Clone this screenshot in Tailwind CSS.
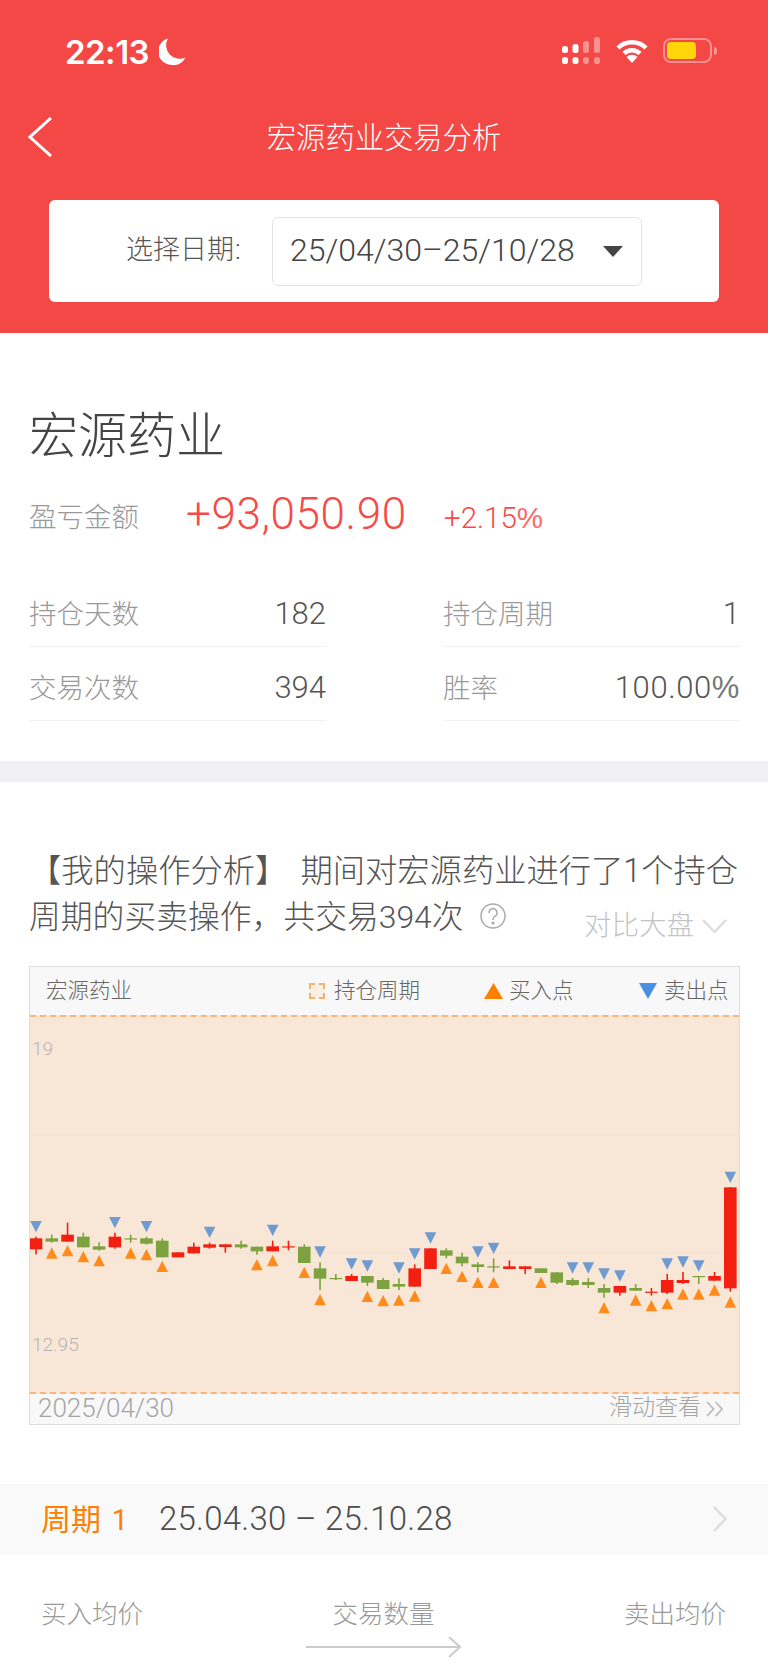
<!DOCTYPE html>
<html lang="zh-CN">
<head>
  <meta charset="UTF-8" />
  <meta name="viewport" content="width=device-width, initial-scale=1.0" />
  <title>宏源药业交易分析</title>
  <script src="https://cdn.jsdelivr.net/npm/@tailwindcss/browser@4"></script>
</head>
<body class="w-[768px] h-[1663px] overflow-hidden bg-white text-[#555] font-light font-['Roboto','Noto_Sans_CJK_SC',sans-serif]">

  <!-- Red header -->
  <div class="h-[333px] bg-[#f44846] text-white relative">
    <!-- Status bar -->
    <div class="h-[100px] flex items-start pl-[65px] pr-[51px] pt-[38px]">
      <span class="text-[33px] leading-[28px] font-semibold font-['Inter',sans-serif] tracking-[-0.5px]">22:13</span>
      <svg class="ml-[10px]" width="27" height="27" viewBox="0 0 27 27"><path d="M9 0.5 A13.5 13.5 0 0 0 26.5 19.5 A13 13 0 0 1 13 27 A13.5 13.5 0 0 1 9 0.5 Z" fill="#fff"/></svg>
      <div class="ml-auto flex items-start -mt-[1px]">
        <svg width="38" height="28" viewBox="0 0 38 28" fill="#fff">
          <rect x="0" y="9" width="6" height="7" rx="2.5"/><rect x="10.500" y="7" width="6" height="9" rx="2.500"/>
          <rect x="21" y="4" width="6" height="12" rx="2.500" opacity=".4"/><rect x="32" y="0" width="6" height="16" rx="2.500" opacity=".4"/>
          <rect x="0" y="20" width="6" height="7" rx="2.500"/><rect x="10.500" y="20" width="6" height="7" rx="2.500"/>
          <rect x="21" y="20" width="6" height="7" rx="2.500" opacity=".4"/><rect x="32" y="20" width="6" height="7" rx="2.500" opacity=".4"/>
        </svg>
        <svg class="ml-[16px] mt-[2px]" width="32" height="24" viewBox="0 0 32 24" fill="none" stroke="#fff" stroke-width="4.500">
          <path d="M2 9 A20 20 0 0 1 30 9"/><path d="M8 14.500 A11.500 11.500 0 0 1 24 14.500"/>
          <path d="M16 24 L10.500 18 A8 8 0 0 1 21.500 18 Z" fill="#fff" stroke="none"/>
        </svg>
        <div class="ml-[15px] mt-[1px] w-[49px] h-[25px] rounded-[8px] border-2 border-white/40 p-[2px]">
          <div class="w-[29px] h-full rounded-[4px] bg-[#ffd60a]"></div>
        </div>
        <div class="ml-[2px] mt-[10px] w-[3px] h-[8px] rounded-r-full bg-white/40"></div>
      </div>
    </div>
    <!-- Nav bar -->
    <div class="h-[100px] relative flex justify-center pt-[18px]">
      <svg class="absolute left-[28px] top-[17px]" width="24" height="40" viewBox="0 0 24 40" fill="none" stroke="#fff" stroke-width="3"><path d="M23 1 L2 20 L23 39"/></svg>
      <span class="text-[29.300px] leading-[40px]">宏源药业交易分析</span>
    </div>
    <!-- Date picker -->
    <div class="absolute left-[49px] top-[200px] w-[670px] h-[102px] bg-white rounded-[6px] flex items-center">
      <span class="ml-[77px] w-[146px] -mt-[2px] text-[27px] text-[#555]">选择日期<span class="ml-[1px]">:</span></span>
      <div class="w-[370px] h-[69px] border border-[#e3e3e3] rounded-[6px] flex items-center pl-[17px] pr-[18px] text-[#444]">
        <span class="text-[32px] -mt-[2px]">25/04/30–25/10/28</span>
        <svg class="ml-auto" width="20" height="11" viewBox="0 0 20 11"><path d="M0 0 H20 L10 11 Z" fill="#444"/></svg>
      </div>
    </div>
  </div>

  <!-- Summary -->
  <div class="h-[428px] pl-[29px] pr-[28px] pt-[79px]">
    <h1 class="text-[49px] leading-[50px] text-[#444]">宏源药业</h1>
    <div class="mt-[36px] flex items-center h-[40px]">
      <span class="w-[157px] text-[27.500px] text-[#999]">盈亏金额</span>
      <span class="w-[258px] mb-[9px] text-[44px] tracking-[0.6px] text-[#f64a48]">+93,050.90</span>
      <span class="text-[29.500px] text-[#f64a48]">+2.15<span class="font-['Liberation_Sans'] text-[#fa6a69]">%</span></span>
    </div>
    <div class="mt-[35px] grid grid-cols-[297px_297px] justify-between">
      <div class="h-[74px] border-b border-[#f1f1f1] flex justify-between items-center pt-[10px]"><span class="text-[27.500px] text-[#999]">持仓天数</span><span class="text-[31px]">182</span></div>
      <div class="h-[74px] border-b border-[#f1f1f1] flex justify-between items-center pt-[10px]"><span class="text-[27.500px] text-[#999]">持仓周期</span><span class="text-[31px]">1</span></div>
      <div class="h-[74px] border-b border-[#f1f1f1] flex justify-between items-center pt-[10px]"><span class="text-[27.500px] text-[#999]">交易次数</span><span class="text-[31px]">394</span></div>
      <div class="h-[74px] border-b border-[#f1f1f1] flex justify-between items-center pt-[10px]"><span class="text-[27.500px] text-[#999]">胜率</span><span class="text-[31px] tracking-[0.6px]">100.00<span class="font-['Liberation_Sans'] text-[#777]">%</span></span></div>
    </div>
  </div>

  <div class="h-[21px] bg-[#efeff4]"></div>

  <!-- Operation analysis -->
  <div class="relative h-[702px] pl-[29px] pr-[28px] pt-[66px]">
    <p class="text-[32.300px] leading-[46px] text-[#555] whitespace-nowrap">【我的操作分析】<span class="ml-[13px]">期间对宏源药业进行了1个持仓</span><br /><span class="text-[31.800px]">周期的买卖操作&#65292;共交易394次</span></p>
    <svg class="absolute left-[480px] top-[121px]" width="26" height="26" viewBox="0 0 26 26" fill="none" stroke="#aaa" stroke-width="1.500">
      <circle cx="13" cy="13" r="12"/><path d="M9 10 A4 4 0 1 1 14.500 13.500 Q13 14.500 13 17"/><circle cx="13" cy="20" r=".8" fill="#aaa"/>
    </svg>
    <div class="absolute right-[41px] top-[127px] flex items-center">
      <span class="text-[27.500px] leading-[34px] text-[#c4c4c4]">对比大盘</span>
      <svg class="ml-[8px]" width="25" height="15" viewBox="0 0 25 15" fill="none" stroke="#ddd" stroke-width="2.500"><path d="M1 1 L12.500 13 L24 1"/></svg>
    </div>

    <!-- Chart -->
    <div class="mt-[26px] h-[459px] w-[711px] border border-[#dddddd] bg-[#f8f8f8]">
      <div class="h-[48px] flex items-center text-[21.500px] text-[#666]">
        <span class="ml-[16px] w-[263px]">宏源药业</span>
        <span class="w-[16px] h-[16px] border-2 border-dashed border-[#f9b06f] bg-[#f8efe6]"></span>
        <span class="ml-[9px] w-[150px]">持仓周期</span>
        <svg width="19" height="16" viewBox="0 0 19 16"><path d="M9.500 0 L19 16 H0 Z" fill="#ff8000"/></svg>
        <span class="ml-[6px] w-[130px]">买入点</span>
        <svg width="18" height="16" viewBox="0 0 18 16"><path d="M0 0 H18 L9 16 Z" fill="#4a90e2"/></svg>
        <span class="ml-[7px]">卖出点</span>
      </div>
      <div class="relative h-[379px] bg-[#f8e7d7] border-y-2 border-dashed border-[#fbb378]">
        <span class="absolute left-[2px] top-[20px] text-[19px] leading-[24px] text-[#b5b5b5]">19</span>
        <span class="absolute left-[2px] top-[316px] text-[19px] leading-[24px] text-[#b5b5b5]">12.95</span>
        <svg id="kline" class="absolute left-0 top-0" width="709" height="375" viewBox="30 1017 709 375"></svg>
      </div>
      <div class="h-[29px] flex items-center pl-[8px] pr-[15px] text-[#a5a5a5]">
        <span class="text-[26px]">2025/04/30</span>
        <span class="ml-auto text-[23px]">滑动查看</span>
        <svg class="ml-[5px]" width="18" height="16" viewBox="0 0 18 16" fill="none" stroke="#bbb" stroke-width="1.800"><path d="M1 1 L7.500 8 L1 15"/><path d="M9.500 1 L16 8 L9.500 15"/></svg>
      </div>
    </div>
  </div>

  <!-- Period row -->
  <div class="h-[70px] bg-[#f9f9f9] flex items-center pl-[41px] pr-[41px]">
    <span class="w-[118px] text-[30px] font-normal text-[#ff8000]">周期 <span class="ml-[3px]">1</span></span>
    <span class="text-[33px] tracking-[0.25px] text-[#4d4d4d]">25.04.30 – 25.10.28</span>
    <svg class="ml-auto" width="14" height="26" viewBox="0 0 14 26" fill="none" stroke="#ddd" stroke-width="2.500"><path d="M1 1 L12.500 13 L1 25"/></svg>
  </div>

  <!-- Table head -->
  <div class="pt-[43px] pl-[41px] pr-[42px] flex justify-between text-[25.500px] leading-[34px] text-[#999]">
    <span>买入均价</span>
    <span>交易数量</span>
    <span>卖出均价</span>
  </div>
  <svg class="block mx-auto mt-[5px]" width="156" height="22" viewBox="0 0 156 22" fill="none" stroke="#ccc" stroke-width="2"><path d="M0 11 H154 M143 1 L154 11 L143 21"/></svg>

  <script>
    // colour, bodyTop, bodyBottom, wickTop, wickBottom, sellTop, buyTop (read off 3x crops)
    const R = '#f32012', G = '#7ea23f';
    const candles = [
      [R,535,568,530,583,483,0],[G,535,545,524,548,0,562],[R,524,545,488,545,0,555],[G,530,562,518,562,0,573],
      [G,559,569,547,572,0,585],[R,530,562,518,566,471,0],[G,535,538,524,548,0,562],[G,535,551,530,554,483,567],
      [G,542,592,535,592,0,602],[R,577,592,577,592,0,0],[R,560,580,548,580,0,0],[R,553,563,548,566,500,0],
      [R,553,561,553,578,0,0],[G,553,562,542,566,0,0],[G,560,574,560,584,0,597],[R,559,574,542,574,494,585],
      [R,559,562,542,571,0,0],[G,560,609,553,609,0,620],[G,625,656,607,690,559,702],[G,654,657,642,660,0,0],
      [R,648,663,642,663,595,0],[G,648,668,648,678,601,692],[G,660,687,654,687,0,705],
      // second crop starts 100px lower
      [G,372,380,355,390,307,403],[R,325,380,313,380,265,391],[R,265,327,265,327,217,0],[G,271,287,265,295,0,308],
      [G,290,310,278,319,0,332],[G,313,321,307,337,259,350],[G,319,322,295,337,248,350],[R,319,327,301,327,0,0],
      [R,319,327,319,342,0,0],[G,325,339,325,339,0,350],[G,337,368,337,372,0,0],[G,360,375,354,378,307,0],
      [G,366,375,354,384,307,0],[G,384,398,372,413,325,426],[R,378,398,378,407,331,0],[G,384,392,372,392,0,403],
      [R,395,398,384,407,0,420],[R,360,398,342,402,295,414],[R,360,369,336,372,289,385],[G,348,351,348,372,301,385],
      [R,348,362,336,362,0,373],[R,82,385,82,395,35,409]
    ];
    let out = '<path d="M30 1135 H739 M30 1253 H739" stroke="#f3dfcf" stroke-width="1"/>';
    candles.forEach((c, i) => {
      const base = i < 23 ? 1060 : 1160;
      const y = v => base + v / 3;
      const x = 36 + 15.78 * i;
      out += `<rect x="${x - .8}" y="${y(c[3])}" width="1.6" height="${(c[4] - c[3]) / 3}" fill="${c[0]}"/>`;
      out += `<rect x="${x - 6.3}" y="${y(c[1])}" width="12.6" height="${Math.max((c[2] - c[1]) / 3, 1.2)}" fill="${c[0]}"/>`;
      if (c[5]) out += `<path d="M${x - 5.8} ${y(c[5])} h11.6 l-5.8 11.3 Z" fill="#6f9bd1"/>`;
      if (c[6]) out += `<path d="M${x - 5.8} ${y(c[6]) + 11.3} h11.6 l-5.8 -11.3 Z" fill="#ff8c1a"/>`;
    });
    document.getElementById('kline').innerHTML = out;
  </script>
</body>
</html>
